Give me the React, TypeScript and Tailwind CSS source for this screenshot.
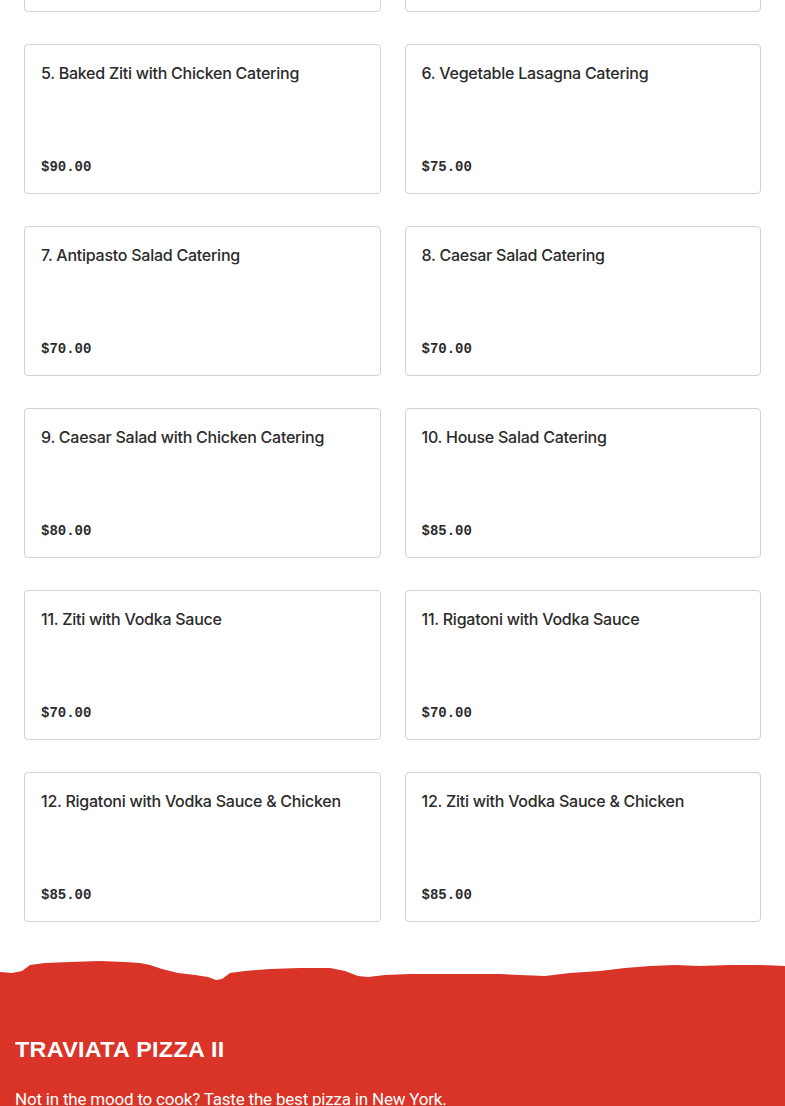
import React from "react";

const items: { name: string; price: string }[] = [
  { name: "5. Baked Ziti with Chicken Catering", price: "$90.00" },
  { name: "6. Vegetable Lasagna Catering", price: "$75.00" },
  { name: "7. Antipasto Salad Catering", price: "$70.00" },
  { name: "8. Caesar Salad Catering", price: "$70.00" },
  { name: "9. Caesar Salad with Chicken Catering", price: "$80.00" },
  { name: "10. House Salad Catering", price: "$85.00" },
  { name: "11. Ziti with Vodka Sauce", price: "$70.00" },
  { name: "11. Rigatoni with Vodka Sauce", price: "$70.00" },
  { name: "12. Rigatoni with Vodka Sauce & Chicken", price: "$85.00" },
  { name: "12. Ziti with Vodka Sauce & Chicken", price: "$85.00" },
];

function Card({ name, price }: { name: string; price: string }) {
  return (
    <div className="h-[150px] rounded-[4px] border border-[#d2d2d2] bg-white p-4 flex flex-col justify-between">
      <div className="text-[16px] leading-6 font-medium text-[#2b2b2b] font-['Inter',sans-serif] tracking-[-0.25px]">
        {name}
      </div>
      <div className="text-[14px] leading-5 font-bold text-[#2b2b2b] font-['Liberation_Mono',monospace]">
        {price}
      </div>
    </div>
  );
}

export default function App() {
  return (
    <div className="w-[785px] h-[1106px] overflow-hidden bg-white">
      <div className="px-6 -mt-[138px]">
        <div className="grid grid-cols-2 gap-x-6 gap-y-8">
          <div className="h-[150px] rounded-[4px] border border-[#d2d2d2] bg-white" />
          <div className="h-[150px] rounded-[4px] border border-[#d2d2d2] bg-white" />
          {items.map((it, i) => (
            <Card key={i} name={it.name} price={it.price} />
          ))}
        </div>
      </div>
      <div className="mt-[36px]">
        <svg
          className="block w-full h-[24px]"
          viewBox="0 0 785 24"
          preserveAspectRatio="none"
        >
          <path
            fill="#d93427"
            d="M0 14 L12 15 L22 13 L30 7 L45 5 L70 4 L100 3 L125 4 L140 5 L150 7 L162 11 L178 15 L195 17 L208 19 L216 22 L222 21 L230 15 L245 13 L270 11 L300 10 L330 10 L345 13 L358 18 L368 19 L385 17 L410 16 L440 16 L470 16 L500 16 L520 17 L545 18 L570 15 L600 13 L625 10 L650 8 L675 7 L700 8 L730 7 L760 7 L785 8 L785 24 L0 24 Z"
          />
        </svg>
        <div className="bg-[#d93427] h-[200px] px-[15px] pt-[54px]">
          <div className="text-white text-[22px] leading-7 font-black tracking-[0.3px] font-['Liberation_Sans',Arial,sans-serif] scale-x-[1.06] origin-left">
            TRAVIATA PIZZA II
          </div>
          <div className="mt-6 text-white text-[17px] leading-[22px] font-['Roboto',sans-serif] tracking-[-0.2px]">
            Not in the mood to cook? Taste the best pizza in New York.
          </div>
        </div>
      </div>
    </div>
  );
}
